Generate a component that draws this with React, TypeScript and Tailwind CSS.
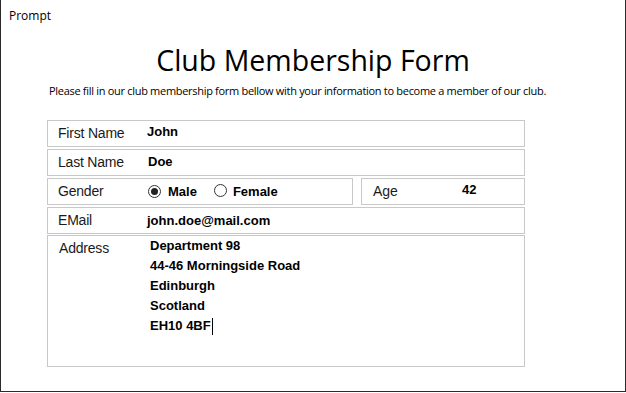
import React from 'react';

const segoe = { fontFamily: '"Open Sans", "Noto Sans", sans-serif' };

function Row({ label, children, className = '' }: { label: string; children?: React.ReactNode; className?: string }) {
  return (
    <div className={`flex items-center border border-[#c8c8c8] h-[27px] ${className}`}>
      <span className="w-[99px] shrink-0 pl-[10px] text-[14px] text-[#1a1a1a] tracking-[-0.2px]">{label}</span>
      {children}
    </div>
  );
}

function Radio({ checked }: { checked?: boolean }) {
  return (
    <span className="inline-flex items-center justify-center w-[13px] h-[13px] rounded-full border border-[#333] bg-white">
      {checked && <span className="w-[7px] h-[7px] rounded-full bg-[#222]" />}
    </span>
  );
}

export default function App() {
  return (
    <div
      className="w-[626px] h-[392px] bg-white border-l border-r border-b border-[#2b2b2b]"
      style={{ fontFamily: '"Liberation Sans", Arial, sans-serif' }}
    >
      <div className="pl-[8px] pt-[8px] text-[12px] leading-[16px] text-black" style={segoe}>
        Prompt
      </div>
      <h1 className="mt-[18px] text-center text-[28.5px] leading-[36px] font-normal text-black" style={segoe}>
        Club Membership Form
      </h1>
      <p className="pl-[48px] mt-[6px] text-[11px] leading-[14px] tracking-[-0.3px] text-black" style={segoe}>
        Please fill in our club membership form bellow with your information to become a member of our club.
      </p>

      <div className="ml-[46px] w-[478px] mt-[22px] flex flex-col gap-[2px]">
        <Row label="First Name">
          <span className="text-[13px] font-bold text-black -mt-[4px]">John</span>
        </Row>
        <Row label="Last Name">
          <span className="pl-[1px] text-[13px] font-bold text-black -mt-[2px]">Doe</span>
        </Row>
        <div className="flex gap-[8px]">
          <Row label="Gender" className="w-[306px]">
            <div className="flex items-center pl-[1px]">
              <Radio checked />
              <span className="ml-[7px] text-[13px] font-bold text-black">Male</span>
              <span className="ml-[17px]">
                <Radio />
              </span>
              <span className="ml-[6px] text-[13px] font-bold text-black">Female</span>
            </div>
          </Row>
          <div className="flex-1 flex items-center border border-[#c8c8c8] h-[27px]">
            <span className="w-[100px] pl-[11px] text-[14px] text-[#1a1a1a]">Age</span>
            <span className="text-[13px] font-bold text-black -mt-[3px]">42</span>
          </div>
        </div>
        <Row label="EMail">
          <span className="text-[13px] font-bold text-black">john.doe@mail.com</span>
        </Row>
        <div className="flex border border-[#c8c8c8] h-[132px] mt-[-1px]">
          <span className="w-[102px] shrink-0 pl-[11px] pt-[2px] text-[14px] text-[#1a1a1a] tracking-[-0.2px]">Address</span>
          <div className="text-[13px] leading-[20px] font-bold text-black">
            <div>Department 98</div>
            <div>44-46 Morningside Road</div>
            <div>Edinburgh</div>
            <div>Scotland</div>
            <div className="flex items-center">
              EH10 4BF
              <span className="inline-block w-[1px] h-[17px] bg-black ml-[1px]" />
            </div>
          </div>
        </div>
      </div>
    </div>
  );
}
